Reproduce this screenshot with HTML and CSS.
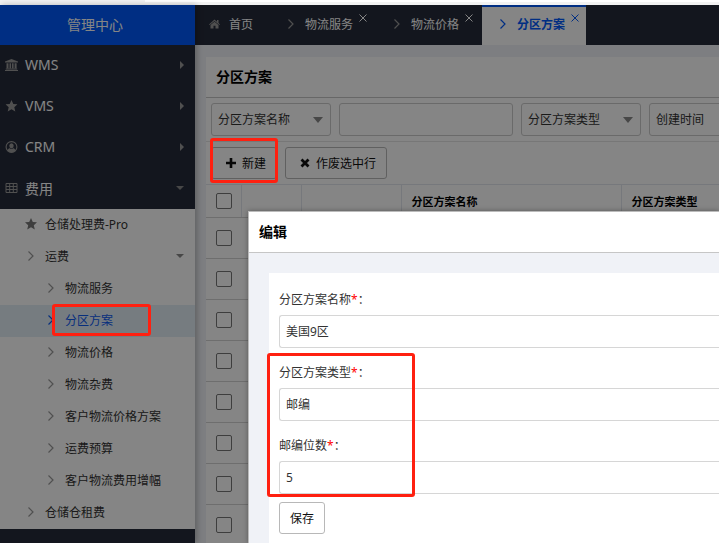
FILE: index.html
```
<!DOCTYPE html>
<html lang="zh-CN">
<head>
    <meta charset="UTF-8">
    <meta name="viewport" content="width=device-width, initial-scale=1.0">
    <title>管理中心 - 分区方案</title>
    <link rel="stylesheet" href="styles.css">
</head>
<body>
    <svg class="sprite" aria-hidden="true">
        <symbol id="chevron" viewBox="0 0 6 10"><path d="M0.5 0.5L5 5l-4.5 4.500" fill="none" stroke="currentColor" stroke-width="1.2"/></symbol>
        <symbol id="close" viewBox="0 0 8 8"><path d="M0.5 0.5l7 7M7.5 0.5l-7 7" fill="none" stroke="currentColor"/></symbol>
        <symbol id="star" viewBox="0 0 12 12"><path d="M6 0l1.800 3.900 4.200 0.400-3.200 2.900 1 4.300L6 9.300l-3.800 2.200 1-4.300L0 4.300l4.200-0.400z" fill="currentColor"/></symbol>
    </svg>
    <div class="strip"><div class="strip-tab"></div></div>
    <div class="app">
        <nav class="sidebar">
            <div class="brand">管理中心</div>
            <a href="#" class="nav-item">
                <svg class="nav-icon" viewBox="0 0 13 12"><path d="M6.5 0L13 2.6v1H0v-1zM1.5 4.3h2v4.9h-2zM4.5 4.3h1.6v4.9H4.5zM7 4.3h1.6v4.9H7zM9.6 4.3h2v4.9h-2zM0.8 9.6h11.4v1H0.8zM0 11h13v1H0z" fill="currentColor"/></svg>
                <span>WMS</span><i class="caret caret-right"></i>
            </a>
            <a href="#" class="nav-item">
                <svg class="nav-icon" viewBox="0 0 12 12"><use href="#star"/></svg>
                <span>VMS</span><i class="caret caret-right"></i>
            </a>
            <a href="#" class="nav-item">
                <svg class="nav-icon" viewBox="0 0 12 12"><circle cx="6" cy="6" r="5.4" fill="none" stroke="currentColor" stroke-width="1.1"/><ellipse cx="6" cy="4.7" rx="2.2" ry="2.5" fill="currentColor"/><path d="M2 9.6c0.5-1.9 1.5-2.4 2.3-2.4 1 0.7 2.4 0.7 3.4 0 0.8 0 1.8 0.5 2.3 2.4-2 2.5-6 2.5-8 0z" fill="currentColor"/></svg>
                <span>CRM</span><i class="caret caret-right"></i>
            </a>
            <a href="#" class="nav-item">
                <svg class="nav-icon" viewBox="0 0 12 12"><path d="M0.5 1.5h11v9h-11zM0.5 4.5h11M0.5 7.5h11M4.2 1.5v9M7.8 1.5v9" fill="none" stroke="currentColor"/></svg>
                <span>费用</span><i class="caret caret-down"></i>
            </a>
            <div class="submenu">
                <a href="#" class="sub-item"><svg class="star"><use href="#star"/></svg>仓储处理费-Pro</a>
                <a href="#" class="sub-item"><svg class="chevron"><use href="#chevron"/></svg>运费<i class="caret caret-down"></i></a>
                <a href="#" class="sub-item deep"><svg class="chevron"><use href="#chevron"/></svg>物流服务</a>
                <a href="#" class="sub-item deep active"><svg class="chevron"><use href="#chevron"/></svg>分区方案<span class="mark mark-menu"></span></a>
                <a href="#" class="sub-item deep"><svg class="chevron"><use href="#chevron"/></svg>物流价格</a>
                <a href="#" class="sub-item deep"><svg class="chevron"><use href="#chevron"/></svg>物流杂费</a>
                <a href="#" class="sub-item deep"><svg class="chevron"><use href="#chevron"/></svg>客户物流价格方案</a>
                <a href="#" class="sub-item deep"><svg class="chevron"><use href="#chevron"/></svg>运费预算</a>
                <a href="#" class="sub-item deep"><svg class="chevron"><use href="#chevron"/></svg>客户物流费用增幅</a>
                <a href="#" class="sub-item"><svg class="chevron"><use href="#chevron"/></svg>仓储仓租费</a>
            </div>
        </nav>

        <main class="main">
            <div class="tabs">
                <a href="#" class="tab home">
                    <svg class="home-icon" viewBox="0 0 11 10"><path d="M5.5 0.5L8 2.7V1h1.5v3L11 5.4l-0.6 0.6L5.5 1.9 0.6 6 0 5.4zM5.5 2.8L9.5 6v3.5H6.5V6.8h-2v2.7h-3V6z" fill="currentColor"/></svg>首页
                </a>
                <div class="tab">
                    <svg class="chevron"><use href="#chevron"/></svg><a href="#">物流服务</a>
                    <button type="button" class="tab-close" aria-label="关闭"><svg><use href="#close"/></svg></button>
                </div>
                <div class="tab">
                    <svg class="chevron"><use href="#chevron"/></svg><a href="#">物流价格</a>
                    <button type="button" class="tab-close" aria-label="关闭"><svg><use href="#close"/></svg></button>
                </div>
                <div class="tab active">
                    <svg class="chevron"><use href="#chevron"/></svg><a href="#">分区方案</a>
                    <button type="button" class="tab-close" aria-label="关闭"><svg><use href="#close"/></svg></button>
                </div>
            </div>

            <section class="panel">
                <h1>分区方案</h1>
                <div class="filters">
                    <div class="select"><select aria-label="筛选字段"><option>分区方案名称</option></select></div>
                    <input type="text" class="keyword" aria-label="关键字">
                    <div class="select"><select aria-label="类型"><option>分区方案类型</option></select></div>
                    <div class="select"><select aria-label="时间"><option>创建时间</option></select></div>
                </div>
                <div class="toolbar">
                    <div class="marked">
                        <button type="button" class="btn"><svg viewBox="0 0 10 10"><path d="M5 0v10M0 5h10" stroke="currentColor" stroke-width="2.6"/></svg>新建</button>
                        <span class="mark mark-new"></span>
                    </div>
                    <button type="button" class="btn"><svg viewBox="0 0 10 10"><path d="M1.5 1.5l7 7M8.5 1.5l-7 7" stroke="currentColor" stroke-width="2.8"/></svg>作废选中行</button>
                </div>
                <table class="grid">
                    <colgroup>
                        <col class="col-check"><col class="col-no"><col class="col-action"><col class="col-name"><col class="col-type">
                    </colgroup>
                    <thead>
                        <tr><th><input type="checkbox" aria-label="全选"></th><th></th><th></th><th>分区方案名称</th><th>分区方案类型</th></tr>
                    </thead>
                    <tbody>
                        <tr><td><input type="checkbox" aria-label="选择第1行"></td><td></td><td></td><td></td><td></td></tr>
                        <tr><td><input type="checkbox" aria-label="选择第2行"></td><td></td><td></td><td></td><td></td></tr>
                        <tr><td><input type="checkbox" aria-label="选择第3行"></td><td></td><td></td><td></td><td></td></tr>
                        <tr><td><input type="checkbox" aria-label="选择第4行"></td><td></td><td></td><td></td><td></td></tr>
                        <tr><td><input type="checkbox" aria-label="选择第5行"></td><td></td><td></td><td></td><td></td></tr>
                        <tr><td><input type="checkbox" aria-label="选择第6行"></td><td></td><td></td><td></td><td></td></tr>
                        <tr><td><input type="checkbox" aria-label="选择第7行"></td><td></td><td></td><td></td><td></td></tr>
                        <tr><td><input type="checkbox" aria-label="选择第8行"></td><td></td><td></td><td></td><td></td></tr>
                    </tbody>
                </table>
            </section>
        </main>
    </div>

    <div class="overlay"></div>

    <div class="modal" role="dialog" aria-labelledby="modalTitle">
        <h2 id="modalTitle">编辑</h2>
        <div class="modal-body">
            <form class="form">
                <label for="name">分区方案名称<span class="required">*</span>：</label>
                <input type="text" id="name" value="美国9区">
                <div class="marked">
                    <label for="type">分区方案类型<span class="required">*</span>：</label>
                    <input type="text" id="type" value="邮编">
                    <label for="digits">邮编位数<span class="required">*</span>：</label>
                    <input type="text" id="digits" value="5">
                    <span class="mark mark-form"></span>
                </div>
                <button type="button" class="btn save">保存</button>
            </form>
        </div>
    </div>
</body>
</html>
```
FILE: styles.css
```
* {
    box-sizing: border-box;
}

body {
    margin: 0;
    height: 100vh;
    display: flex;
    flex-direction: column;
    position: relative;
    overflow: hidden;
    font-family: "Noto Sans", "Noto Sans CJK SC", sans-serif;
    font-size: 12px;
    color: #333;
}

a {
    color: inherit;
    text-decoration: none;
}

input,
select,
button {
    font: inherit;
    color: inherit;
}

.sprite {
    position: absolute;
    width: 0;
    height: 0;
}

.strip {
    height: 5px;
    flex: none;
    padding-left: 145px;
    background: #f2f2f2;
}

.strip-tab {
    height: 2px;
    background: #fff;
}

.app {
    flex: 1;
    min-height: 0;
    display: flex;
}

/* Sidebar */
.sidebar {
    position: relative;
    width: 195px;
    flex: none;
    background: #262b3a;
    box-shadow: 2px 0 6px rgba(0, 0, 0, 0.25);
}

.brand {
    height: 40px;
    line-height: 40px;
    padding-right: 5px;
    text-align: center;
    font-size: 14px;
    color: #fff;
    background: #0059fb;
}

.nav-item {
    display: flex;
    align-items: center;
    height: 41px;
    padding: 0 11px 2px 5px;
    font-size: 14px;
    color: #fff;
}

.nav-icon {
    width: 13px;
    height: 12px;
    margin-right: 7px;
    color: #999;
}

.caret {
    margin-left: auto;
    border: 4px solid transparent;
}

.caret-right {
    border-left-color: #999;
    border-right-width: 0;
}

.caret-down {
    border-top-color: #888;
    border-bottom-width: 0;
}

.submenu {
    background: #fff;
}

.sub-item {
    display: flex;
    align-items: center;
    height: 32px;
    padding: 0 11px 2px 25px;
}

.chevron {
    width: 6px;
    height: 10px;
    flex: none;
    color: #999;
}

.sub-item .chevron {
    margin: 0 11px 0 3px;
}

.sub-item .star {
    width: 12px;
    height: 12px;
    margin-right: 8px;
    color: #777;
}

.sub-item.deep {
    padding-left: 45px;
}

.sub-item.active {
    position: relative;
    background: #e3eef6;
}

.sub-item.active,
.sub-item.active .chevron {
    color: #0f5bf0;
}

/* Tabs */
.main {
    flex: 1;
    min-width: 0;
    display: flex;
    flex-direction: column;
    background: #f0f2f7;
}

.tabs {
    display: flex;
    gap: 2px;
    height: 40px;
    flex: none;
    background: #262b3a;
}

.tab {
    display: flex;
    align-items: center;
    position: relative;
    width: 104px;
    padding: 0 0 2px 18px;
    color: #fff;
}

.tab .chevron {
    margin-right: 11px;
}

.tab.home {
    width: 73px;
    padding-left: 14px;
}

.home-icon {
    width: 11px;
    height: 10px;
    margin-right: 9px;
    color: #999;
}

.tab-close {
    position: absolute;
    top: 9px;
    right: 7px;
    padding: 0;
    border: none;
    background: none;
    line-height: 0;
    cursor: pointer;
}

.tab-close svg {
    width: 8px;
    height: 8px;
}

.tab.active {
    border-top: 2px solid #0059fb;
    padding-bottom: 4px;
    background: #fff;
    color: #0059fb;
    font-weight: bold;
}

.tab.active .chevron {
    color: #0059fb;
}

.tab.active .tab-close {
    top: 7px;
}

/* List */
.panel {
    flex: 1;
    min-height: 0;
    margin: 12px 0 0 11px;
    background: #fff;
    overflow: hidden;
}

h1,
h2 {
    margin: 0;
    height: 41px;
    line-height: 40px;
    padding: 0 10px;
    border-bottom: 1px solid #c6c6c6;
    font-size: 14px;
    color: #000;
}

.filters {
    display: flex;
    gap: 8px;
    padding: 5px;
    border-bottom: 1px solid #e4e4e4;
}

.filters .select,
.filters .keyword {
    height: 33px;
    flex: none;
}

.select {
    position: relative;
    width: 120px;
}

.select::after {
    content: "";
    position: absolute;
    top: 14px;
    right: 8px;
    border: 5px solid transparent;
    border-top: 6px solid #888;
    border-bottom: none;
    pointer-events: none;
}

.select select {
    width: 100%;
    height: 100%;
    padding: 0 6px;
    border: 1px solid #ccc;
    border-radius: 3px;
    background: #fff;
    appearance: none;
}

.filters .keyword {
    width: 174px;
    border: 1px solid #ccc;
    border-radius: 3px;
    background: #fff;
}

.toolbar {
    display: flex;
    gap: 8px;
    padding: 5px;
    border-bottom: 1px solid #e2e6ee;
}

.marked {
    position: relative;
}

.btn {
    display: flex;
    align-items: center;
    gap: 6px;
    height: 32px;
    padding: 0 10px 1px 14px;
    border: 1px solid #b8b8b8;
    border-radius: 3px;
    background: #fff;
    color: #111;
    cursor: pointer;
}

.btn svg {
    width: 10px;
    height: 10px;
}

.grid {
    width: 100%;
    min-width: 640px;
    table-layout: fixed;
    border-collapse: collapse;
}

.col-check {
    width: 35px;
}

.col-no {
    width: 60px;
}

.col-action {
    width: 100px;
}

.col-name {
    width: 220px;
}

.grid th,
.grid td {
    height: 41px;
    padding: 0 10px;
    border-bottom: 1px solid #d4d4d4;
    text-align: left;
}

.grid th {
    height: 32px;
    border-right: 1px solid #e2e6ee;
    font-size: 11px;
    color: #000;
}

.grid input {
    display: block;
    width: 16px;
    height: 16px;
    margin: 0;
    border: 1px solid #777;
    border-radius: 2px;
    appearance: none;
}

/* Edit dialog */
.overlay {
    position: absolute;
    inset: 5px 0 0;
    z-index: 10;
    background: rgba(0, 0, 0, 0.48);
}

.modal {
    position: absolute;
    top: 211px;
    left: 248px;
    right: 0;
    bottom: 0;
    z-index: 20;
    display: flex;
    flex-direction: column;
    border: 1px solid #bbb;
    border-width: 1px 0 0 1px;
    background: #fff;
    box-shadow: 0 0 5px rgba(0, 0, 0, 0.35);
}

.modal-body {
    flex: 1;
    min-height: 0;
    padding: 20px 0 0 20px;
    background: #f0f2f7;
}

.form {
    height: 100%;
    padding: 10px 0 0 10px;
    background: #fff;
}

.form label {
    display: block;
    height: 32px;
    line-height: 34px;
}

.form input {
    display: block;
    width: 100%;
    height: 33px;
    margin-bottom: 8px;
    padding: 0 6px 1px;
    border: 1px solid #d6d6d6;
    border-right: none;
    border-radius: 3px 0 0 3px;
}

.required {
    color: #f00;
}

.btn.save {
    padding: 0 10px 1px;
}

/* Highlight frames */
.mark {
    position: absolute;
    z-index: 15;
    border: 3px solid #ff2010;
    border-radius: 3px;
    pointer-events: none;
}

.mark-menu {
    top: -1px;
    left: 52px;
    width: 99px;
    height: 32px;
}

.mark-new {
    inset: -9px -1px -4px -1px;
}

.mark-form {
    top: -3px;
    left: -12px;
    width: 148px;
    height: 144px;
}
```
